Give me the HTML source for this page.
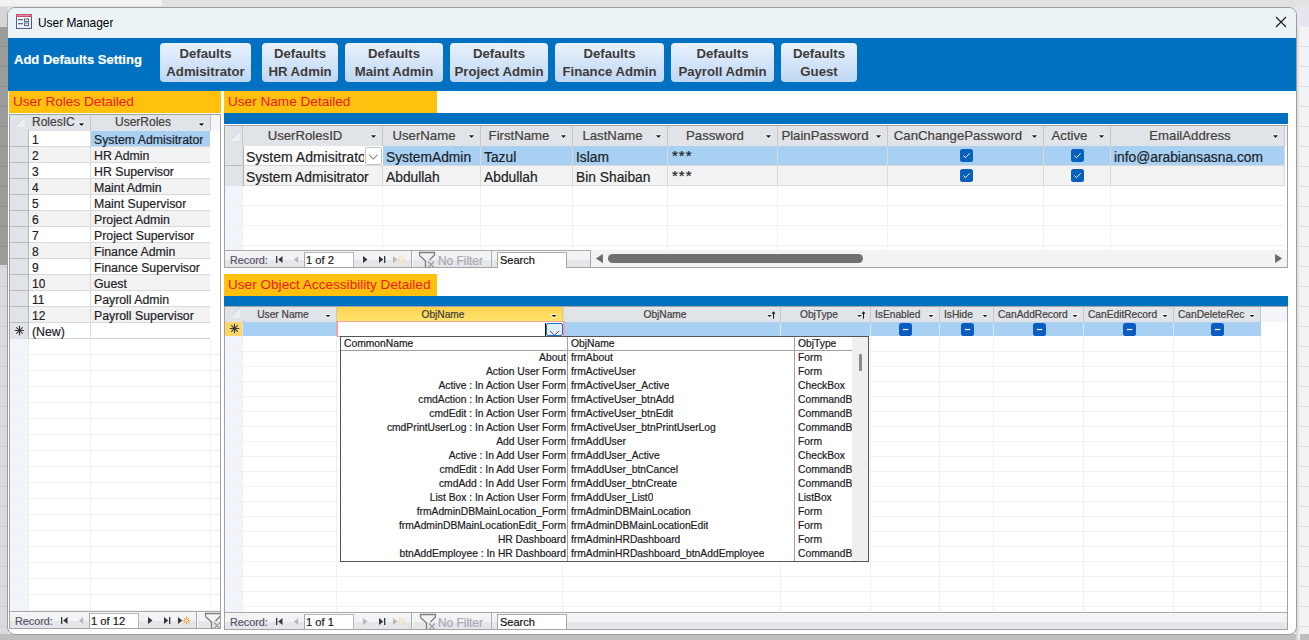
<!DOCTYPE html>
<html><head><meta charset="utf-8">
<style>
*{box-sizing:border-box;margin:0;padding:0}
html,body{width:1309px;height:640px;overflow:hidden;background:#e4e4e4;font-family:"Liberation Sans",sans-serif;position:relative}
.a{position:absolute}
.t{white-space:nowrap;overflow:hidden;-webkit-text-stroke:0.2px currentColor}
.btn{position:absolute;top:43px;height:39px;border-radius:4px;background:linear-gradient(#e9f2fd,#bfd7f3);color:#3f3b39;font-weight:bold;font-size:13.2px;line-height:18px;text-align:center;padding-top:1.5px;white-space:nowrap}
.org{position:absolute;background:#ffc10e;color:#ea1a20;font-size:13.6px;line-height:21px;padding-left:4px;white-space:nowrap}
</style></head><body>

<div class="a" style="left:0px;top:0px;width:1309px;height:7px;background:#e2e2e2"></div>
<div class="a" style="left:0px;top:0px;width:162px;height:6px;background:#f2f2f2"></div>
<div class="a" style="left:0px;top:7px;width:8px;height:20px;background:#d6d6d6"></div>
<div class="a" style="left:0px;top:27px;width:8px;height:238px;background:#9c9c9c"></div>
<div class="a" style="left:0px;top:265px;width:8px;height:375px;background:#dadade"></div>
<div class="a" style="left:1296px;top:7px;width:13px;height:633px;background:#f3f3f5"></div>
<div class="a" style="left:0px;top:634px;width:1309px;height:6px;background:#bebebe"></div>
<div class="a" style="left:1296px;top:7px;width:13px;height:20px;background:#e6e6ee"></div>
<div class="a" style="left:1296px;top:27px;width:4px;height:613px;background:linear-gradient(90deg,#d0d0d0,#f3f3f5)"></div>
<div class="a" style="left:1296px;top:46px;width:13px;height:1px;background:#e0e0e2"></div>
<div class="a" style="left:0px;top:46px;width:8px;height:1px;background:#8e8e8e"></div>
<div class="a" style="left:1296px;top:66px;width:13px;height:1px;background:#e0e0e2"></div>
<div class="a" style="left:0px;top:66px;width:8px;height:1px;background:#8e8e8e"></div>
<div class="a" style="left:1296px;top:86px;width:13px;height:1px;background:#e0e0e2"></div>
<div class="a" style="left:0px;top:86px;width:8px;height:1px;background:#8e8e8e"></div>
<div class="a" style="left:1296px;top:106px;width:13px;height:1px;background:#e0e0e2"></div>
<div class="a" style="left:0px;top:106px;width:8px;height:1px;background:#8e8e8e"></div>
<div class="a" style="left:1296px;top:126px;width:13px;height:1px;background:#e0e0e2"></div>
<div class="a" style="left:0px;top:126px;width:8px;height:1px;background:#8e8e8e"></div>
<div class="a" style="left:1296px;top:146px;width:13px;height:1px;background:#e0e0e2"></div>
<div class="a" style="left:0px;top:146px;width:8px;height:1px;background:#8e8e8e"></div>
<div class="a" style="left:1296px;top:166px;width:13px;height:1px;background:#e0e0e2"></div>
<div class="a" style="left:0px;top:166px;width:8px;height:1px;background:#8e8e8e"></div>
<div class="a" style="left:1296px;top:186px;width:13px;height:1px;background:#e0e0e2"></div>
<div class="a" style="left:0px;top:186px;width:8px;height:1px;background:#8e8e8e"></div>
<div class="a" style="left:1296px;top:206px;width:13px;height:1px;background:#e0e0e2"></div>
<div class="a" style="left:0px;top:206px;width:8px;height:1px;background:#8e8e8e"></div>
<div class="a" style="left:1296px;top:226px;width:13px;height:1px;background:#e0e0e2"></div>
<div class="a" style="left:0px;top:226px;width:8px;height:1px;background:#8e8e8e"></div>
<div class="a" style="left:1296px;top:246px;width:13px;height:1px;background:#e0e0e2"></div>
<div class="a" style="left:0px;top:246px;width:8px;height:1px;background:#8e8e8e"></div>
<div class="a" style="left:1296px;top:266px;width:13px;height:1px;background:#e0e0e2"></div>
<div class="a" style="left:0px;top:266px;width:8px;height:1px;background:#cdcdd2"></div>
<div class="a" style="left:1296px;top:286px;width:13px;height:1px;background:#e0e0e2"></div>
<div class="a" style="left:0px;top:286px;width:8px;height:1px;background:#cdcdd2"></div>
<div class="a" style="left:1296px;top:306px;width:13px;height:1px;background:#e0e0e2"></div>
<div class="a" style="left:0px;top:306px;width:8px;height:1px;background:#cdcdd2"></div>
<div class="a" style="left:1296px;top:326px;width:13px;height:1px;background:#e0e0e2"></div>
<div class="a" style="left:0px;top:326px;width:8px;height:1px;background:#cdcdd2"></div>
<div class="a" style="left:1296px;top:346px;width:13px;height:1px;background:#e0e0e2"></div>
<div class="a" style="left:0px;top:346px;width:8px;height:1px;background:#cdcdd2"></div>
<div class="a" style="left:1296px;top:366px;width:13px;height:1px;background:#e0e0e2"></div>
<div class="a" style="left:0px;top:366px;width:8px;height:1px;background:#cdcdd2"></div>
<div class="a" style="left:1296px;top:386px;width:13px;height:1px;background:#e0e0e2"></div>
<div class="a" style="left:0px;top:386px;width:8px;height:1px;background:#cdcdd2"></div>
<div class="a" style="left:1296px;top:406px;width:13px;height:1px;background:#e0e0e2"></div>
<div class="a" style="left:0px;top:406px;width:8px;height:1px;background:#cdcdd2"></div>
<div class="a" style="left:1296px;top:426px;width:13px;height:1px;background:#e0e0e2"></div>
<div class="a" style="left:0px;top:426px;width:8px;height:1px;background:#cdcdd2"></div>
<div class="a" style="left:1296px;top:446px;width:13px;height:1px;background:#e0e0e2"></div>
<div class="a" style="left:0px;top:446px;width:8px;height:1px;background:#cdcdd2"></div>
<div class="a" style="left:1296px;top:466px;width:13px;height:1px;background:#e0e0e2"></div>
<div class="a" style="left:0px;top:466px;width:8px;height:1px;background:#cdcdd2"></div>
<div class="a" style="left:1296px;top:486px;width:13px;height:1px;background:#e0e0e2"></div>
<div class="a" style="left:0px;top:486px;width:8px;height:1px;background:#cdcdd2"></div>
<div class="a" style="left:1296px;top:506px;width:13px;height:1px;background:#e0e0e2"></div>
<div class="a" style="left:0px;top:506px;width:8px;height:1px;background:#cdcdd2"></div>
<div class="a" style="left:1296px;top:526px;width:13px;height:1px;background:#e0e0e2"></div>
<div class="a" style="left:0px;top:526px;width:8px;height:1px;background:#cdcdd2"></div>
<div class="a" style="left:1296px;top:546px;width:13px;height:1px;background:#e0e0e2"></div>
<div class="a" style="left:0px;top:546px;width:8px;height:1px;background:#cdcdd2"></div>
<div class="a" style="left:1296px;top:566px;width:13px;height:1px;background:#e0e0e2"></div>
<div class="a" style="left:0px;top:566px;width:8px;height:1px;background:#cdcdd2"></div>
<div class="a" style="left:1296px;top:586px;width:13px;height:1px;background:#e0e0e2"></div>
<div class="a" style="left:0px;top:586px;width:8px;height:1px;background:#cdcdd2"></div>
<div class="a" style="left:1296px;top:606px;width:13px;height:1px;background:#e0e0e2"></div>
<div class="a" style="left:0px;top:606px;width:8px;height:1px;background:#cdcdd2"></div>
<div class="a" style="left:1296px;top:626px;width:13px;height:1px;background:#e0e0e2"></div>
<div class="a" style="left:0px;top:626px;width:8px;height:1px;background:#cdcdd2"></div>
<div class="a" style="left:7px;top:7px;width:1290px;height:628px;border:1px solid #9c9c9c;border-radius:8px;background:#fff;overflow:hidden">
<div class="a" style="left:0;top:0;width:1288px;height:30px;background:#ebf3f6"></div>
<div class="a" style="left:0;top:30px;width:1288px;height:53px;background:#0070c0"></div>
</div>
<svg class="a" style="left:16px;top:14px" width="16" height="15" viewBox="0 0 16 15">
<defs><linearGradient id="ib" x1="0" y1="0" x2="1" y2="1"><stop offset="0" stop-color="#fff"/><stop offset="1" stop-color="#dde4fa"/></linearGradient></defs>
<rect x="0.5" y="0.5" width="15" height="14" fill="url(#ib)" stroke="#56607e"/>
<rect x="0" y="0" width="16" height="3" fill="#c94a72"/>
<rect x="1" y="1" width="14" height="1" fill="#e48aa6"/>
<rect x="2" y="5" width="5" height="1.3" fill="#5a6aa0"/>
<rect x="2" y="9" width="5" height="1.3" fill="#5a6aa0"/>
<rect x="8.5" y="5" width="4" height="2.5" fill="#eef2fa" stroke="#5a6890" stroke-width="1"/>
<rect x="8.5" y="9" width="4" height="2.5" fill="#eef2fa" stroke="#5a6890" stroke-width="1"/>
</svg>
<div class="a t" style="left:38px;top:15px;font-size:11.9px;color:#000;line-height:16px;-webkit-text-stroke:0">User Manager</div>
<svg class="a" style="left:1275px;top:16px" width="12" height="12" viewBox="0 0 12 12"><path d="M1 1L11 11M11 1L1 11" stroke="#1a1a1a" stroke-width="1.1"/></svg>
<div class="a t" style="left:14px;top:52px;color:#fff;font-weight:bold;font-size:13px;line-height:16px">Add Defaults Setting</div>
<div class="btn" style="left:160px;width:91px">Defaults<br>Admisitrator</div>
<div class="btn" style="left:262px;width:76px">Defaults<br>HR Admin</div>
<div class="btn" style="left:345px;width:98px">Defaults<br>Maint Admin</div>
<div class="btn" style="left:450px;width:98px">Defaults<br>Project Admin</div>
<div class="btn" style="left:555px;width:109px">Defaults<br>Finance Admin</div>
<div class="btn" style="left:671px;width:103px">Defaults<br>Payroll Admin</div>
<div class="btn" style="left:781px;width:76px">Defaults<br>Guest</div>
<div class="org" style="left:9px;top:91px;width:212px;height:22px">User Roles Detailed</div>
<div class="a" style="left:9px;top:114px;width:212px;height:515px;border:1px solid #a3a3a3;background:#fff"></div>
<div class="a" style="left:10px;top:115px;width:200px;height:16px;background:#e0e3e8"></div>
<div class="a" style="left:210px;top:115px;width:10px;height:16px;background:#f4f5fb"></div>
<svg class="a" style="left:14px;top:116px" width="12" height="12" viewBox="0 0 12 12"><path d="M0 11L11 0V11Z" fill="#eceef2"/><path d="M0.5 11L11 0.5" stroke="#a9c6ea" stroke-width="0.8"/></svg>
<div class="a" style="left:90px;top:115px;width:1px;height:16px;background:#c4c8cc"></div>
<div class="a" style="left:210px;top:115px;width:1px;height:16px;background:#c4c8cc"></div>
<div class="a t" style="left:32px;top:115px;width:49px;font-size:12px;line-height:15px;color:#44403c;">RolesIC</div>
<svg class="a" style="left:77px;top:122px" width="9" height="6" viewBox="0 0 9 6"><path d="M0.5 0.5H8.5L4.5 5Z" fill="#fff"/><path d="M1.8 1.2H7.2L4.5 4Z" fill="#1a1e28"/></svg>
<div class="a t" style="left:91px;top:115px;width:104px;font-size:12px;line-height:15px;color:#44403c;text-align:center">UserRoles</div>
<svg class="a" style="left:197px;top:122px" width="9" height="6" viewBox="0 0 9 6"><path d="M0.5 0.5H8.5L4.5 5Z" fill="#fff"/><path d="M1.8 1.2H7.2L4.5 4Z" fill="#1a1e28"/></svg>
<div class="a" style="left:28px;top:131px;width:182px;height:16px;background:#fff"></div>
<div class="a" style="left:91px;top:131px;width:119px;height:15px;background:#a8d0f2"></div>
<div class="a" style="left:28px;top:146px;width:182px;height:1px;background:#dadada"></div>
<div class="a" style="left:90px;top:131px;width:1px;height:16px;background:#dadada"></div>
<div class="a" style="left:10px;top:131px;width:18px;height:16px;background:#e0e3e8"></div>
<div class="a" style="left:10px;top:146px;width:18px;height:1px;background:#b9bcc0"></div>
<div class="a t" style="left:32px;top:132px;font-size:12px;line-height:16px;color:#1e1e28">1</div>
<div class="a t" style="left:94px;top:132px;font-size:12.3px;line-height:16px;color:#1e1e28">System Admisitrator</div>
<div class="a" style="left:28px;top:147px;width:182px;height:16px;background:#f2f2f2"></div>
<div class="a" style="left:28px;top:162px;width:182px;height:1px;background:#dadada"></div>
<div class="a" style="left:90px;top:147px;width:1px;height:16px;background:#dadada"></div>
<div class="a" style="left:10px;top:147px;width:18px;height:16px;background:#e0e3e8"></div>
<div class="a" style="left:10px;top:162px;width:18px;height:1px;background:#b9bcc0"></div>
<div class="a t" style="left:32px;top:148px;font-size:12px;line-height:16px;color:#1e1e28">2</div>
<div class="a t" style="left:94px;top:148px;font-size:12.3px;line-height:16px;color:#1e1e28">HR Admin</div>
<div class="a" style="left:28px;top:163px;width:182px;height:16px;background:#fff"></div>
<div class="a" style="left:28px;top:178px;width:182px;height:1px;background:#dadada"></div>
<div class="a" style="left:90px;top:163px;width:1px;height:16px;background:#dadada"></div>
<div class="a" style="left:10px;top:163px;width:18px;height:16px;background:#e0e3e8"></div>
<div class="a" style="left:10px;top:178px;width:18px;height:1px;background:#b9bcc0"></div>
<div class="a t" style="left:32px;top:164px;font-size:12px;line-height:16px;color:#1e1e28">3</div>
<div class="a t" style="left:94px;top:164px;font-size:12.3px;line-height:16px;color:#1e1e28">HR Supervisor</div>
<div class="a" style="left:28px;top:179px;width:182px;height:16px;background:#f2f2f2"></div>
<div class="a" style="left:28px;top:194px;width:182px;height:1px;background:#dadada"></div>
<div class="a" style="left:90px;top:179px;width:1px;height:16px;background:#dadada"></div>
<div class="a" style="left:10px;top:179px;width:18px;height:16px;background:#e0e3e8"></div>
<div class="a" style="left:10px;top:194px;width:18px;height:1px;background:#b9bcc0"></div>
<div class="a t" style="left:32px;top:180px;font-size:12px;line-height:16px;color:#1e1e28">4</div>
<div class="a t" style="left:94px;top:180px;font-size:12.3px;line-height:16px;color:#1e1e28">Maint Admin</div>
<div class="a" style="left:28px;top:195px;width:182px;height:16px;background:#fff"></div>
<div class="a" style="left:28px;top:210px;width:182px;height:1px;background:#dadada"></div>
<div class="a" style="left:90px;top:195px;width:1px;height:16px;background:#dadada"></div>
<div class="a" style="left:10px;top:195px;width:18px;height:16px;background:#e0e3e8"></div>
<div class="a" style="left:10px;top:210px;width:18px;height:1px;background:#b9bcc0"></div>
<div class="a t" style="left:32px;top:196px;font-size:12px;line-height:16px;color:#1e1e28">5</div>
<div class="a t" style="left:94px;top:196px;font-size:12.3px;line-height:16px;color:#1e1e28">Maint Supervisor</div>
<div class="a" style="left:28px;top:211px;width:182px;height:16px;background:#f2f2f2"></div>
<div class="a" style="left:28px;top:226px;width:182px;height:1px;background:#dadada"></div>
<div class="a" style="left:90px;top:211px;width:1px;height:16px;background:#dadada"></div>
<div class="a" style="left:10px;top:211px;width:18px;height:16px;background:#e0e3e8"></div>
<div class="a" style="left:10px;top:226px;width:18px;height:1px;background:#b9bcc0"></div>
<div class="a t" style="left:32px;top:212px;font-size:12px;line-height:16px;color:#1e1e28">6</div>
<div class="a t" style="left:94px;top:212px;font-size:12.3px;line-height:16px;color:#1e1e28">Project Admin</div>
<div class="a" style="left:28px;top:227px;width:182px;height:16px;background:#fff"></div>
<div class="a" style="left:28px;top:242px;width:182px;height:1px;background:#dadada"></div>
<div class="a" style="left:90px;top:227px;width:1px;height:16px;background:#dadada"></div>
<div class="a" style="left:10px;top:227px;width:18px;height:16px;background:#e0e3e8"></div>
<div class="a" style="left:10px;top:242px;width:18px;height:1px;background:#b9bcc0"></div>
<div class="a t" style="left:32px;top:228px;font-size:12px;line-height:16px;color:#1e1e28">7</div>
<div class="a t" style="left:94px;top:228px;font-size:12.3px;line-height:16px;color:#1e1e28">Project Supervisor</div>
<div class="a" style="left:28px;top:243px;width:182px;height:16px;background:#f2f2f2"></div>
<div class="a" style="left:28px;top:258px;width:182px;height:1px;background:#dadada"></div>
<div class="a" style="left:90px;top:243px;width:1px;height:16px;background:#dadada"></div>
<div class="a" style="left:10px;top:243px;width:18px;height:16px;background:#e0e3e8"></div>
<div class="a" style="left:10px;top:258px;width:18px;height:1px;background:#b9bcc0"></div>
<div class="a t" style="left:32px;top:244px;font-size:12px;line-height:16px;color:#1e1e28">8</div>
<div class="a t" style="left:94px;top:244px;font-size:12.3px;line-height:16px;color:#1e1e28">Finance Admin</div>
<div class="a" style="left:28px;top:259px;width:182px;height:16px;background:#fff"></div>
<div class="a" style="left:28px;top:274px;width:182px;height:1px;background:#dadada"></div>
<div class="a" style="left:90px;top:259px;width:1px;height:16px;background:#dadada"></div>
<div class="a" style="left:10px;top:259px;width:18px;height:16px;background:#e0e3e8"></div>
<div class="a" style="left:10px;top:274px;width:18px;height:1px;background:#b9bcc0"></div>
<div class="a t" style="left:32px;top:260px;font-size:12px;line-height:16px;color:#1e1e28">9</div>
<div class="a t" style="left:94px;top:260px;font-size:12.3px;line-height:16px;color:#1e1e28">Finance Supervisor</div>
<div class="a" style="left:28px;top:275px;width:182px;height:16px;background:#f2f2f2"></div>
<div class="a" style="left:28px;top:290px;width:182px;height:1px;background:#dadada"></div>
<div class="a" style="left:90px;top:275px;width:1px;height:16px;background:#dadada"></div>
<div class="a" style="left:10px;top:275px;width:18px;height:16px;background:#e0e3e8"></div>
<div class="a" style="left:10px;top:290px;width:18px;height:1px;background:#b9bcc0"></div>
<div class="a t" style="left:32px;top:276px;font-size:12px;line-height:16px;color:#1e1e28">10</div>
<div class="a t" style="left:94px;top:276px;font-size:12.3px;line-height:16px;color:#1e1e28">Guest</div>
<div class="a" style="left:28px;top:291px;width:182px;height:16px;background:#fff"></div>
<div class="a" style="left:28px;top:306px;width:182px;height:1px;background:#dadada"></div>
<div class="a" style="left:90px;top:291px;width:1px;height:16px;background:#dadada"></div>
<div class="a" style="left:10px;top:291px;width:18px;height:16px;background:#e0e3e8"></div>
<div class="a" style="left:10px;top:306px;width:18px;height:1px;background:#b9bcc0"></div>
<div class="a t" style="left:32px;top:292px;font-size:12px;line-height:16px;color:#1e1e28">11</div>
<div class="a t" style="left:94px;top:292px;font-size:12.3px;line-height:16px;color:#1e1e28">Payroll Admin</div>
<div class="a" style="left:28px;top:307px;width:182px;height:16px;background:#f2f2f2"></div>
<div class="a" style="left:28px;top:322px;width:182px;height:1px;background:#dadada"></div>
<div class="a" style="left:90px;top:307px;width:1px;height:16px;background:#dadada"></div>
<div class="a" style="left:10px;top:307px;width:18px;height:16px;background:#e0e3e8"></div>
<div class="a" style="left:10px;top:322px;width:18px;height:1px;background:#b9bcc0"></div>
<div class="a t" style="left:32px;top:308px;font-size:12px;line-height:16px;color:#1e1e28">12</div>
<div class="a t" style="left:94px;top:308px;font-size:12.3px;line-height:16px;color:#1e1e28">Payroll Supervisor</div>
<div class="a" style="left:28px;top:130px;width:1px;height:208px;background:#b4b6ba"></div>
<div class="a" style="left:10px;top:323px;width:18px;height:16px;background:#e0e3e8"></div>
<div class="a" style="left:28px;top:323px;width:1px;height:16px;background:#b4b6ba"></div>
<div class="a" style="left:28px;top:338px;width:182px;height:1px;background:#cfcfcf"></div>
<div class="a" style="left:90px;top:323px;width:1px;height:16px;background:#dadada"></div>
<svg class="a" style="left:14px;top:325px" width="11" height="11" viewBox="0 0 11 11"><path d="M5.5 0.8V10.2M0.8 5.5H10.2M2.3 2.3L8.7 8.7M8.7 2.3L2.3 8.7" stroke="#38383e" stroke-width="1.1"/><circle cx="5.5" cy="5.5" r="1.3" fill="#38383e"/></svg>
<div class="a t" style="left:32px;top:324px;font-size:12.3px;line-height:16px;color:#1e1e28">(New)</div>
<div class="a" style="left:10px;top:339px;width:18px;height:272px;background:#f2f4fc"></div>
<div class="a" style="left:10px;top:354px;width:210px;height:1px;background:#f0f0f0"></div>
<div class="a" style="left:10px;top:370px;width:210px;height:1px;background:#f0f0f0"></div>
<div class="a" style="left:10px;top:386px;width:210px;height:1px;background:#f0f0f0"></div>
<div class="a" style="left:10px;top:402px;width:210px;height:1px;background:#f0f0f0"></div>
<div class="a" style="left:10px;top:418px;width:210px;height:1px;background:#f0f0f0"></div>
<div class="a" style="left:10px;top:434px;width:210px;height:1px;background:#f0f0f0"></div>
<div class="a" style="left:10px;top:450px;width:210px;height:1px;background:#f0f0f0"></div>
<div class="a" style="left:10px;top:466px;width:210px;height:1px;background:#f0f0f0"></div>
<div class="a" style="left:10px;top:482px;width:210px;height:1px;background:#f0f0f0"></div>
<div class="a" style="left:10px;top:498px;width:210px;height:1px;background:#f0f0f0"></div>
<div class="a" style="left:10px;top:514px;width:210px;height:1px;background:#f0f0f0"></div>
<div class="a" style="left:10px;top:530px;width:210px;height:1px;background:#f0f0f0"></div>
<div class="a" style="left:10px;top:546px;width:210px;height:1px;background:#f0f0f0"></div>
<div class="a" style="left:10px;top:562px;width:210px;height:1px;background:#f0f0f0"></div>
<div class="a" style="left:10px;top:578px;width:210px;height:1px;background:#f0f0f0"></div>
<div class="a" style="left:10px;top:594px;width:210px;height:1px;background:#f0f0f0"></div>
<div class="a" style="left:10px;top:610px;width:210px;height:1px;background:#f0f0f0"></div>
<div class="a" style="left:28px;top:339px;width:1px;height:272px;background:#ececec"></div>
<div class="a" style="left:90px;top:339px;width:1px;height:272px;background:#f0f0f0"></div>
<div class="a" style="left:210px;top:339px;width:1px;height:272px;background:#f3f3f3"></div>
<div class="a" style="left:10px;top:611px;width:210px;height:1px;background:#a8a8a8"></div>
<div class="a" style="left:10px;top:612px;width:210px;height:16px;background:linear-gradient(#fafbfc 0,#f2f3f5 1px,#f2f3f5 9px,#e5e6e9 9px)"></div>
<div class="a t" style="left:15px;top:613px;font-size:10.8px;line-height:17px;color:#575268">Record:</div>
<svg class="a" style="left:61px;top:617px" width="8" height="7" viewBox="0 0 8 7"><rect x="0" y="0" width="1.3" height="7" fill="#34363c"/><path d="M2.2 3.5L6.5 0V7Z" fill="#34363c"/></svg>
<svg class="a" style="left:79px;top:617px" width="5" height="7" viewBox="0 0 5 7"><path d="M0 3.5L4.2 0V7Z" fill="#b6b8bc"/></svg>
<div class="a" style="left:89px;top:613px;width:50px;height:15px;background:#fff;border-left:1px solid #a8a8a8;border-right:1px solid #b8b8b8;border-top:1px solid #b8b8b8"></div>
<div class="a t" style="left:91px;top:613px;font-size:11.2px;line-height:17px;color:#1a1a24">1 of 12</div>
<svg class="a" style="left:148px;top:617px" width="5" height="7" viewBox="0 0 5 7"><path d="M0 0L4.5 3.5L0 7Z" fill="#34363c"/></svg>
<svg class="a" style="left:164px;top:617px" width="7" height="7" viewBox="0 0 7 7"><path d="M0 0L4.2 3.5L0 7Z" fill="#34363c"/><rect x="5" y="0" width="1.3" height="7" fill="#34363c"/></svg>
<svg class="a" style="left:178px;top:615px" width="14" height="12" viewBox="0 0 14 12"><path d="M0 2L4.2 5.5L0 9Z" fill="#34363c"/><g stroke="#f0a030" stroke-width="1"><path d="M8.5 1.5V9.5M4.5 5.5H12.5M5.7 2.7L11.3 8.3M11.3 2.7L5.7 8.3"/></g><circle cx="8.5" cy="5.5" r="1.6" fill="#fff" stroke="#f0a030"/></svg>
<div class="a" style="left:196px;top:612px;width:1px;height:16px;background:#a8a8a8"></div>
<div class="a" style="left:197px;top:612px;width:1px;height:16px;background:#fcfcfc"></div>
<svg class="a" style="left:204px;top:612px" width="16" height="17" viewBox="0 0 16 17"><g fill="none" stroke="#7e7e7e" stroke-width="1.3"><path d="M1.5 4.5V1.5H16.5V4L11.5 9"/><path d="M1.5 4.5L7.5 10V16.5"/><path d="M10 10.5L16 16.5M16 10.5L10 16.5" stroke="#9a9a9a" stroke-width="1.1"/></g></svg>
<div class="a" style="left:220px;top:612px;width:1px;height:17px;background:#a3a3a3"></div>
<div class="org" style="left:224px;top:91px;width:213px;height:22px">User Name Detailed</div>
<div class="a" style="left:224px;top:113px;width:1064px;height:11px;background:#0070c0"></div>
<div class="a" style="left:224px;top:125px;width:1064px;height:143px;border:1px solid #a3a3a3;background:#fff"></div>
<div class="a" style="left:225px;top:126px;width:1060px;height:20px;background:#e0e3e8"></div>
<div class="a" style="left:1285px;top:126px;width:2px;height:20px;background:#f4f5fb"></div>
<svg class="a" style="left:229px;top:130px" width="12" height="12" viewBox="0 0 12 12"><path d="M0 11L11 0V11Z" fill="#eceef2"/><path d="M0.5 11L11 0.5" stroke="#a9c6ea" stroke-width="0.8"/></svg>
<div class="a" style="left:242px;top:126px;width:1px;height:20px;background:#c4c8cc"></div>
<div class="a t" style="left:243px;top:126px;width:124px;font-size:13.2px;line-height:20px;color:#44403c;text-align:center">UserRolesID</div>
<svg class="a" style="left:369px;top:134px" width="9" height="6" viewBox="0 0 9 6"><path d="M0.5 0.5H8.5L4.5 5Z" fill="#fff"/><path d="M1.8 1.2H7.2L4.5 4Z" fill="#1a1e28"/></svg>
<div class="a" style="left:382px;top:126px;width:1px;height:20px;background:#c4c8cc"></div>
<div class="a t" style="left:383px;top:126px;width:82px;font-size:13.2px;line-height:20px;color:#44403c;text-align:center">UserName</div>
<svg class="a" style="left:467px;top:134px" width="9" height="6" viewBox="0 0 9 6"><path d="M0.5 0.5H8.5L4.5 5Z" fill="#fff"/><path d="M1.8 1.2H7.2L4.5 4Z" fill="#1a1e28"/></svg>
<div class="a" style="left:480px;top:126px;width:1px;height:20px;background:#c4c8cc"></div>
<div class="a t" style="left:481px;top:126px;width:76px;font-size:13.2px;line-height:20px;color:#44403c;text-align:center">FirstName</div>
<svg class="a" style="left:559px;top:134px" width="9" height="6" viewBox="0 0 9 6"><path d="M0.5 0.5H8.5L4.5 5Z" fill="#fff"/><path d="M1.8 1.2H7.2L4.5 4Z" fill="#1a1e28"/></svg>
<div class="a" style="left:572px;top:126px;width:1px;height:20px;background:#c4c8cc"></div>
<div class="a t" style="left:573px;top:126px;width:79px;font-size:13.2px;line-height:20px;color:#44403c;text-align:center">LastName</div>
<svg class="a" style="left:654px;top:134px" width="9" height="6" viewBox="0 0 9 6"><path d="M0.5 0.5H8.5L4.5 5Z" fill="#fff"/><path d="M1.8 1.2H7.2L4.5 4Z" fill="#1a1e28"/></svg>
<div class="a" style="left:667px;top:126px;width:1px;height:20px;background:#c4c8cc"></div>
<div class="a t" style="left:668px;top:126px;width:94px;font-size:13.2px;line-height:20px;color:#44403c;text-align:center">Password</div>
<svg class="a" style="left:764px;top:134px" width="9" height="6" viewBox="0 0 9 6"><path d="M0.5 0.5H8.5L4.5 5Z" fill="#fff"/><path d="M1.8 1.2H7.2L4.5 4Z" fill="#1a1e28"/></svg>
<div class="a" style="left:777px;top:126px;width:1px;height:20px;background:#c4c8cc"></div>
<div class="a t" style="left:778px;top:126px;width:94px;font-size:13.2px;line-height:20px;color:#44403c;text-align:center">PlainPassword</div>
<svg class="a" style="left:874px;top:134px" width="9" height="6" viewBox="0 0 9 6"><path d="M0.5 0.5H8.5L4.5 5Z" fill="#fff"/><path d="M1.8 1.2H7.2L4.5 4Z" fill="#1a1e28"/></svg>
<div class="a" style="left:887px;top:126px;width:1px;height:20px;background:#c4c8cc"></div>
<div class="a t" style="left:888px;top:126px;width:140px;font-size:13.2px;line-height:20px;color:#44403c;text-align:center">CanChangePassword</div>
<svg class="a" style="left:1030px;top:134px" width="9" height="6" viewBox="0 0 9 6"><path d="M0.5 0.5H8.5L4.5 5Z" fill="#fff"/><path d="M1.8 1.2H7.2L4.5 4Z" fill="#1a1e28"/></svg>
<div class="a" style="left:1043px;top:126px;width:1px;height:20px;background:#c4c8cc"></div>
<div class="a t" style="left:1044px;top:126px;width:51px;font-size:13.2px;line-height:20px;color:#44403c;text-align:center">Active</div>
<svg class="a" style="left:1097px;top:134px" width="9" height="6" viewBox="0 0 9 6"><path d="M0.5 0.5H8.5L4.5 5Z" fill="#fff"/><path d="M1.8 1.2H7.2L4.5 4Z" fill="#1a1e28"/></svg>
<div class="a" style="left:1110px;top:126px;width:1px;height:20px;background:#c4c8cc"></div>
<div class="a t" style="left:1111px;top:126px;width:158px;font-size:13.2px;line-height:20px;color:#44403c;text-align:center">EmailAddress</div>
<svg class="a" style="left:1271px;top:134px" width="9" height="6" viewBox="0 0 9 6"><path d="M0.5 0.5H8.5L4.5 5Z" fill="#fff"/><path d="M1.8 1.2H7.2L4.5 4Z" fill="#1a1e28"/></svg>
<div class="a" style="left:1284px;top:126px;width:1px;height:20px;background:#c4c8cc"></div>
<div class="a" style="left:243px;top:146px;width:1042px;height:20px;background:#a8d0f2"></div>
<div class="a" style="left:225px;top:146px;width:18px;height:20px;background:#e0e3e8"></div>
<div class="a" style="left:225px;top:165px;width:18px;height:1px;background:#b9bcc0"></div>
<div class="a" style="left:243px;top:165px;width:1042px;height:1px;background:#dadada"></div>
<div class="a" style="left:242px;top:146px;width:1px;height:20px;background:#dadada"></div>
<div class="a t" style="left:246px;top:147px;width:136px;font-size:13.8px;line-height:21px;color:#1e1e28">System Admisitrator</div>
<div class="a" style="left:382px;top:146px;width:1px;height:20px;background:#dadada"></div>
<div class="a t" style="left:386px;top:147px;width:94px;font-size:13.8px;line-height:21px;color:#1e1e28">SystemAdmin</div>
<div class="a" style="left:480px;top:146px;width:1px;height:20px;background:#dadada"></div>
<div class="a t" style="left:484px;top:147px;width:88px;font-size:13.8px;line-height:21px;color:#1e1e28">Tazul</div>
<div class="a" style="left:572px;top:146px;width:1px;height:20px;background:#dadada"></div>
<div class="a t" style="left:576px;top:147px;width:91px;font-size:13.8px;line-height:21px;color:#1e1e28">Islam</div>
<div class="a" style="left:667px;top:146px;width:1px;height:20px;background:#dadada"></div>
<div class="a t" style="left:672px;top:149px;font-size:15px;line-height:14px;color:#1e1e28;letter-spacing:1px">***</div>
<div class="a" style="left:777px;top:146px;width:1px;height:20px;background:#dadada"></div>
<div class="a" style="left:887px;top:146px;width:1px;height:20px;background:#dadada"></div>
<svg class="a" style="left:960px;top:149px" width="13" height="13" viewBox="0 0 13 13"><rect x="0" y="0" width="13" height="13" rx="2.5" fill="#0860bd"/><path d="M3.3 6.6L5.4 8.6L9.7 4.4" fill="none" stroke="#fff" stroke-width="0.95"/></svg>
<div class="a" style="left:1043px;top:146px;width:1px;height:20px;background:#dadada"></div>
<svg class="a" style="left:1071px;top:149px" width="13" height="13" viewBox="0 0 13 13"><rect x="0" y="0" width="13" height="13" rx="2.5" fill="#0860bd"/><path d="M3.3 6.6L5.4 8.6L9.7 4.4" fill="none" stroke="#fff" stroke-width="0.95"/></svg>
<div class="a" style="left:1110px;top:146px;width:1px;height:20px;background:#dadada"></div>
<div class="a t" style="left:1114px;top:147px;width:170px;font-size:13.8px;line-height:21px;color:#1e1e28">info@arabiansasna.com</div>
<div class="a" style="left:1284px;top:146px;width:1px;height:20px;background:#dadada"></div>
<div class="a" style="left:243px;top:166px;width:1042px;height:20px;background:#f2f2f2"></div>
<div class="a" style="left:225px;top:166px;width:18px;height:20px;background:#e0e3e8"></div>
<div class="a" style="left:243px;top:185px;width:1042px;height:1px;background:#dadada"></div>
<div class="a" style="left:242px;top:166px;width:1px;height:20px;background:#dadada"></div>
<div class="a t" style="left:246px;top:167px;width:136px;font-size:13.8px;line-height:21px;color:#1e1e28">System Admisitrator</div>
<div class="a" style="left:382px;top:166px;width:1px;height:20px;background:#dadada"></div>
<div class="a t" style="left:386px;top:167px;width:94px;font-size:13.8px;line-height:21px;color:#1e1e28">Abdullah</div>
<div class="a" style="left:480px;top:166px;width:1px;height:20px;background:#dadada"></div>
<div class="a t" style="left:484px;top:167px;width:88px;font-size:13.8px;line-height:21px;color:#1e1e28">Abdullah</div>
<div class="a" style="left:572px;top:166px;width:1px;height:20px;background:#dadada"></div>
<div class="a t" style="left:576px;top:167px;width:91px;font-size:13.8px;line-height:21px;color:#1e1e28">Bin Shaiban</div>
<div class="a" style="left:667px;top:166px;width:1px;height:20px;background:#dadada"></div>
<div class="a t" style="left:672px;top:169px;font-size:15px;line-height:14px;color:#1e1e28;letter-spacing:1px">***</div>
<div class="a" style="left:777px;top:166px;width:1px;height:20px;background:#dadada"></div>
<div class="a" style="left:887px;top:166px;width:1px;height:20px;background:#dadada"></div>
<svg class="a" style="left:960px;top:169px" width="13" height="13" viewBox="0 0 13 13"><rect x="0" y="0" width="13" height="13" rx="2.5" fill="#0860bd"/><path d="M3.3 6.6L5.4 8.6L9.7 4.4" fill="none" stroke="#fff" stroke-width="0.95"/></svg>
<div class="a" style="left:1043px;top:166px;width:1px;height:20px;background:#dadada"></div>
<svg class="a" style="left:1071px;top:169px" width="13" height="13" viewBox="0 0 13 13"><rect x="0" y="0" width="13" height="13" rx="2.5" fill="#0860bd"/><path d="M3.3 6.6L5.4 8.6L9.7 4.4" fill="none" stroke="#fff" stroke-width="0.95"/></svg>
<div class="a" style="left:1110px;top:166px;width:1px;height:20px;background:#dadada"></div>
<div class="a" style="left:1284px;top:166px;width:1px;height:20px;background:#dadada"></div>
<div class="a" style="left:243px;top:146px;width:140px;height:19px;background:#fff"></div>
<div class="a t" style="left:246px;top:147px;width:118px;font-size:14px;line-height:21px;color:#1e1e28">System Admisitrator</div>
<div class="a" style="left:365px;top:147px;width:17px;height:18px;background:#fff;border:1px solid #c4c4c4;border-radius:2px"></div>
<svg class="a" style="left:368px;top:154px" width="11" height="6" viewBox="0 0 11 6"><path d="M1 0.8L5.3 5L9.6 0.8" fill="none" stroke="#3c3c3c" stroke-width="0.9"/></svg>
<div class="a" style="left:243px;top:146px;width:1px;height:40px;background:#b4b6ba"></div>
<div class="a" style="left:225px;top:186px;width:18px;height:64px;background:#f2f4fc"></div>
<div class="a" style="left:225px;top:205px;width:1060px;height:1px;background:#f1f1f1"></div>
<div class="a" style="left:225px;top:225px;width:1060px;height:1px;background:#f1f1f1"></div>
<div class="a" style="left:225px;top:245px;width:1060px;height:1px;background:#f1f1f1"></div>
<div class="a" style="left:242px;top:186px;width:1px;height:64px;background:#f1f1f1"></div>
<div class="a" style="left:382px;top:186px;width:1px;height:64px;background:#f1f1f1"></div>
<div class="a" style="left:480px;top:186px;width:1px;height:64px;background:#f1f1f1"></div>
<div class="a" style="left:572px;top:186px;width:1px;height:64px;background:#f1f1f1"></div>
<div class="a" style="left:667px;top:186px;width:1px;height:64px;background:#f1f1f1"></div>
<div class="a" style="left:777px;top:186px;width:1px;height:64px;background:#f1f1f1"></div>
<div class="a" style="left:887px;top:186px;width:1px;height:64px;background:#f1f1f1"></div>
<div class="a" style="left:1043px;top:186px;width:1px;height:64px;background:#f1f1f1"></div>
<div class="a" style="left:1110px;top:186px;width:1px;height:64px;background:#f1f1f1"></div>
<div class="a" style="left:225px;top:250px;width:1062px;height:1px;background:#a8a8a8"></div>
<div class="a" style="left:225px;top:251px;width:1062px;height:16px;background:linear-gradient(#fafbfc 0,#f2f3f5 1px,#f2f3f5 9px,#e5e6e9 9px)"></div>
<div class="a t" style="left:230px;top:252px;font-size:10.8px;line-height:17px;color:#575268">Record:</div>
<svg class="a" style="left:276px;top:256px" width="8" height="7" viewBox="0 0 8 7"><rect x="0" y="0" width="1.3" height="7" fill="#34363c"/><path d="M2.2 3.5L6.5 0V7Z" fill="#34363c"/></svg>
<svg class="a" style="left:294px;top:256px" width="5" height="7" viewBox="0 0 5 7"><path d="M0 3.5L4.2 0V7Z" fill="#b6b8bc"/></svg>
<div class="a" style="left:304px;top:252px;width:50px;height:15px;background:#fff;border-left:1px solid #a8a8a8;border-right:1px solid #b8b8b8;border-top:1px solid #b8b8b8"></div>
<div class="a t" style="left:306px;top:252px;font-size:11.2px;line-height:17px;color:#1a1a24">1 of 2</div>
<svg class="a" style="left:363px;top:256px" width="5" height="7" viewBox="0 0 5 7"><path d="M0 0L4.5 3.5L0 7Z" fill="#34363c"/></svg>
<svg class="a" style="left:379px;top:256px" width="7" height="7" viewBox="0 0 7 7"><path d="M0 0L4.2 3.5L0 7Z" fill="#34363c"/><rect x="5" y="0" width="1.3" height="7" fill="#34363c"/></svg>
<svg class="a" style="left:393px;top:254px" width="14" height="12" viewBox="0 0 14 12"><path d="M0 2L4.2 5.5L0 9Z" fill="#b6b8bc"/><g stroke="#f6dcb4" stroke-width="1"><path d="M8.5 1.5V9.5M4.5 5.5H12.5M5.7 2.7L11.3 8.3M11.3 2.7L5.7 8.3"/></g><circle cx="8.5" cy="5.5" r="1.6" fill="#fff" stroke="#f6dcb4"/></svg>
<div class="a" style="left:411px;top:251px;width:1px;height:16px;background:#a8a8a8"></div>
<div class="a" style="left:412px;top:251px;width:1px;height:16px;background:#fcfcfc"></div>
<svg class="a" style="left:418px;top:251px" width="18" height="17" viewBox="0 0 18 17"><g fill="none" stroke="#7e7e7e" stroke-width="1.3"><path d="M1.5 4.5V1.5H16.5V4L11.5 9"/><path d="M1.5 4.5L7.5 10V16.5"/><path d="M10 10.5L16 16.5M16 10.5L10 16.5" stroke="#9a9a9a" stroke-width="1.1"/></g></svg>
<div class="a t" style="left:438px;top:253px;font-size:11.9px;line-height:17px;color:#a8a8b4">No Filter</div>
<div class="a" style="left:491px;top:251px;width:1px;height:17px;background:#b0b0b0"></div>
<div class="a" style="left:497px;top:252px;width:70px;height:16px;background:#fff;border:1px solid #a8a8a8;border-bottom:0"></div>
<div class="a t" style="left:500px;top:252px;font-size:11px;line-height:17px;color:#111">Search</div>
<div class="a" style="left:590px;top:250px;width:1px;height:17px;background:#a4a8b2"></div>
<div class="a" style="left:591px;top:250px;width:696px;height:17px;background:#f3f3f3"></div>
<svg class="a" style="left:596px;top:254px" width="7" height="9" viewBox="0 0 7 9"><path d="M0.3 4.5L6.8 0.3V8.7Z" fill="#6a6a6a" stroke="#6a6a6a" stroke-width="0.5" stroke-linejoin="round"/></svg>
<div class="a" style="left:608px;top:254px;width:255px;height:9px;background:#707070;border-radius:4.5px"></div>
<svg class="a" style="left:1275px;top:254px" width="7" height="9" viewBox="0 0 7 9"><path d="M6.7 4.5L0.2 0.3V8.7Z" fill="#6a6a6a" stroke="#6a6a6a" stroke-width="0.5" stroke-linejoin="round"/></svg>
<div class="org" style="left:224px;top:274px;width:213px;height:22px">User Object Accessibility Detailed</div>
<div class="a" style="left:224px;top:296px;width:1064px;height:10px;background:#0070c0"></div>
<div class="a" style="left:224px;top:306px;width:1064px;height:324px;border:1px solid #a3a3a3;background:#fff"></div>
<div class="a" style="left:225px;top:307px;width:1036px;height:15px;background:#e0e3e8"></div>
<div class="a" style="left:1261px;top:307px;width:26px;height:15px;background:#f4f5fb"></div>
<svg class="a" style="left:229px;top:307px" width="12" height="12" viewBox="0 0 12 12"><path d="M0 11L11 0V11Z" fill="#eceef2"/><path d="M0.5 11L11 0.5" stroke="#a9c6ea" stroke-width="0.8"/></svg>
<div class="a t" style="left:245px;top:307px;width:76px;font-size:10.2px;line-height:15px;color:#44403c;text-align:center">User Name</div>
<svg class="a" style="left:324px;top:314px" width="8" height="5" viewBox="0 0 8 5"><path d="M0.3 0.3H7.7L4 4.5Z" fill="#fff"/><path d="M1.5 1H6.5L4 3.2Z" fill="#1a1e28"/></svg>
<div class="a" style="left:337px;top:307px;width:227px;height:15px;background:linear-gradient(#fdd353,#fee56c)"></div>
<div class="a" style="left:336px;top:307px;width:1px;height:15px;background:#c4c8cc"></div>
<div class="a t" style="left:339px;top:307px;width:208px;font-size:10.2px;line-height:15px;color:#44403c;text-align:center">ObjName</div>
<svg class="a" style="left:550px;top:314px" width="8" height="5" viewBox="0 0 8 5"><path d="M0.3 0.3H7.7L4 4.5Z" fill="#fff"/><path d="M1.5 1H6.5L4 3.2Z" fill="#1a1e28"/></svg>
<div class="a" style="left:562px;top:307px;width:1px;height:15px;background:#c4c8cc"></div>
<div class="a t" style="left:565px;top:307px;width:200px;font-size:10.2px;line-height:15px;color:#44403c;text-align:center">ObjName</div>
<svg class="a" style="left:766px;top:311px" width="11" height="9" viewBox="0 0 11 9"><g stroke="#fff" stroke-width="1.6" fill="#fff" stroke-linejoin="round"><path d="M1 4H6L3.5 6Z"/><path d="M7.5 1.2V7.8M6 2.8L7.5 1L9 2.8" fill="none"/></g><path d="M1 4H6L3.5 6Z" fill="#1a1e28"/><path d="M7.5 1.2V7.8M6.1 2.6L7.5 1.1L8.9 2.6" fill="none" stroke="#1a1e28" stroke-width="1.1"/></svg>
<div class="a" style="left:780px;top:307px;width:1px;height:15px;background:#c4c8cc"></div>
<div class="a t" style="left:783px;top:307px;width:72px;font-size:10.2px;line-height:15px;color:#44403c;text-align:center">ObjType</div>
<svg class="a" style="left:856px;top:311px" width="11" height="9" viewBox="0 0 11 9"><g stroke="#fff" stroke-width="1.6" fill="#fff" stroke-linejoin="round"><path d="M1 4H6L3.5 6Z"/><path d="M7.5 1.2V7.8M6 2.8L7.5 1L9 2.8" fill="none"/></g><path d="M1 4H6L3.5 6Z" fill="#1a1e28"/><path d="M7.5 1.2V7.8M6.1 2.6L7.5 1.1L8.9 2.6" fill="none" stroke="#1a1e28" stroke-width="1.1"/></svg>
<div class="a" style="left:870px;top:307px;width:1px;height:15px;background:#c4c8cc"></div>
<div class="a t" style="left:875px;top:307px;width:49px;font-size:10.2px;line-height:15px;color:#44403c">IsEnabled</div>
<svg class="a" style="left:927px;top:314px" width="8" height="5" viewBox="0 0 8 5"><path d="M0.3 0.3H7.7L4 4.5Z" fill="#fff"/><path d="M1.5 1H6.5L4 3.2Z" fill="#1a1e28"/></svg>
<div class="a" style="left:939px;top:307px;width:1px;height:15px;background:#c4c8cc"></div>
<div class="a t" style="left:944px;top:307px;width:34px;font-size:10.2px;line-height:15px;color:#44403c">IsHide</div>
<svg class="a" style="left:981px;top:314px" width="8" height="5" viewBox="0 0 8 5"><path d="M0.3 0.3H7.7L4 4.5Z" fill="#fff"/><path d="M1.5 1H6.5L4 3.2Z" fill="#1a1e28"/></svg>
<div class="a" style="left:993px;top:307px;width:1px;height:15px;background:#c4c8cc"></div>
<div class="a t" style="left:998px;top:307px;width:70px;font-size:10.2px;line-height:15px;color:#44403c">CanAddRecord</div>
<svg class="a" style="left:1071px;top:314px" width="8" height="5" viewBox="0 0 8 5"><path d="M0.3 0.3H7.7L4 4.5Z" fill="#fff"/><path d="M1.5 1H6.5L4 3.2Z" fill="#1a1e28"/></svg>
<div class="a" style="left:1083px;top:307px;width:1px;height:15px;background:#c4c8cc"></div>
<div class="a t" style="left:1088px;top:307px;width:70px;font-size:10.2px;line-height:15px;color:#44403c">CanEditRecord</div>
<svg class="a" style="left:1161px;top:314px" width="8" height="5" viewBox="0 0 8 5"><path d="M0.3 0.3H7.7L4 4.5Z" fill="#fff"/><path d="M1.5 1H6.5L4 3.2Z" fill="#1a1e28"/></svg>
<div class="a" style="left:1173px;top:307px;width:1px;height:15px;background:#c4c8cc"></div>
<div class="a t" style="left:1178px;top:307px;width:67px;font-size:10.2px;line-height:15px;color:#44403c">CanDeleteRec</div>
<svg class="a" style="left:1248px;top:314px" width="8" height="5" viewBox="0 0 8 5"><path d="M0.3 0.3H7.7L4 4.5Z" fill="#fff"/><path d="M1.5 1H6.5L4 3.2Z" fill="#1a1e28"/></svg>
<div class="a" style="left:1260px;top:307px;width:1px;height:15px;background:#c4c8cc"></div>
<div class="a" style="left:225px;top:322px;width:18px;height:14px;background:#fcd868"></div>
<svg class="a" style="left:229px;top:323px" width="11" height="11" viewBox="0 0 11 11"><path d="M5.5 0.8V10.2M0.8 5.5H10.2M2.3 2.3L8.7 8.7M8.7 2.3L2.3 8.7" stroke="#38383e" stroke-width="1.1"/><circle cx="5.5" cy="5.5" r="1.3" fill="#38383e"/></svg>
<div class="a" style="left:243px;top:321px;width:1px;height:15px;background:#9c9ea2"></div>
<div class="a" style="left:243px;top:322px;width:1018px;height:14px;background:#a8d0f2"></div>
<div class="a" style="left:242px;top:322px;width:1px;height:14px;background:#d8e6f4"></div>
<div class="a" style="left:336px;top:322px;width:1px;height:14px;background:#d8e6f4"></div>
<div class="a" style="left:562px;top:322px;width:1px;height:14px;background:#d8e6f4"></div>
<div class="a" style="left:780px;top:322px;width:1px;height:14px;background:#d8e6f4"></div>
<div class="a" style="left:870px;top:322px;width:1px;height:14px;background:#d8e6f4"></div>
<svg class="a" style="left:899px;top:323px" width="13" height="13" viewBox="0 0 13 13"><rect x="0" y="0" width="13" height="13" rx="2.8" fill="#0a5cc0"/><rect x="3.8" y="5.9" width="5.4" height="1.2" fill="#fff"/></svg>
<div class="a" style="left:939px;top:322px;width:1px;height:14px;background:#d8e6f4"></div>
<svg class="a" style="left:961px;top:323px" width="13" height="13" viewBox="0 0 13 13"><rect x="0" y="0" width="13" height="13" rx="2.8" fill="#0a5cc0"/><rect x="3.8" y="5.9" width="5.4" height="1.2" fill="#fff"/></svg>
<div class="a" style="left:993px;top:322px;width:1px;height:14px;background:#d8e6f4"></div>
<svg class="a" style="left:1033px;top:323px" width="13" height="13" viewBox="0 0 13 13"><rect x="0" y="0" width="13" height="13" rx="2.8" fill="#0a5cc0"/><rect x="3.8" y="5.9" width="5.4" height="1.2" fill="#fff"/></svg>
<div class="a" style="left:1083px;top:322px;width:1px;height:14px;background:#d8e6f4"></div>
<svg class="a" style="left:1123px;top:323px" width="13" height="13" viewBox="0 0 13 13"><rect x="0" y="0" width="13" height="13" rx="2.8" fill="#0a5cc0"/><rect x="3.8" y="5.9" width="5.4" height="1.2" fill="#fff"/></svg>
<div class="a" style="left:1173px;top:322px;width:1px;height:14px;background:#d8e6f4"></div>
<svg class="a" style="left:1211px;top:323px" width="13" height="13" viewBox="0 0 13 13"><rect x="0" y="0" width="13" height="13" rx="2.8" fill="#0a5cc0"/><rect x="3.8" y="5.9" width="5.4" height="1.2" fill="#fff"/></svg>
<div class="a" style="left:336px;top:321px;width:229px;height:16px;background:#fff;border:1px solid #f6a0a0;border-width:1px 2px 1px 2px"></div>
<div class="a" style="left:545px;top:323px;width:1px;height:13px;background:#111"></div>
<div class="a" style="left:546px;top:323px;width:17px;height:13px;background:#e2effb;border:1px solid #1a72d2;border-radius:2px"></div>
<svg class="a" style="left:549px;top:330px" width="11" height="6" viewBox="0 0 11 6"><path d="M1 1L5.5 5.2L10 1" fill="none" stroke="#404040" stroke-width="0.9"/></svg>
<div class="a" style="left:225px;top:336px;width:18px;height:276px;background:#f2f4fc"></div>
<div class="a" style="left:225px;top:351px;width:1062px;height:1px;background:#f1f1f1"></div>
<div class="a" style="left:225px;top:366px;width:1062px;height:1px;background:#f1f1f1"></div>
<div class="a" style="left:225px;top:381px;width:1062px;height:1px;background:#f1f1f1"></div>
<div class="a" style="left:225px;top:396px;width:1062px;height:1px;background:#f1f1f1"></div>
<div class="a" style="left:225px;top:411px;width:1062px;height:1px;background:#f1f1f1"></div>
<div class="a" style="left:225px;top:426px;width:1062px;height:1px;background:#f1f1f1"></div>
<div class="a" style="left:225px;top:441px;width:1062px;height:1px;background:#f1f1f1"></div>
<div class="a" style="left:225px;top:456px;width:1062px;height:1px;background:#f1f1f1"></div>
<div class="a" style="left:225px;top:471px;width:1062px;height:1px;background:#f1f1f1"></div>
<div class="a" style="left:225px;top:486px;width:1062px;height:1px;background:#f1f1f1"></div>
<div class="a" style="left:225px;top:501px;width:1062px;height:1px;background:#f1f1f1"></div>
<div class="a" style="left:225px;top:516px;width:1062px;height:1px;background:#f1f1f1"></div>
<div class="a" style="left:225px;top:531px;width:1062px;height:1px;background:#f1f1f1"></div>
<div class="a" style="left:225px;top:546px;width:1062px;height:1px;background:#f1f1f1"></div>
<div class="a" style="left:225px;top:561px;width:1062px;height:1px;background:#f1f1f1"></div>
<div class="a" style="left:225px;top:576px;width:1062px;height:1px;background:#f1f1f1"></div>
<div class="a" style="left:225px;top:591px;width:1062px;height:1px;background:#f1f1f1"></div>
<div class="a" style="left:225px;top:606px;width:1062px;height:1px;background:#f1f1f1"></div>
<div class="a" style="left:242px;top:336px;width:1px;height:276px;background:#f1f1f1"></div>
<div class="a" style="left:336px;top:336px;width:1px;height:276px;background:#f1f1f1"></div>
<div class="a" style="left:562px;top:336px;width:1px;height:276px;background:#f1f1f1"></div>
<div class="a" style="left:780px;top:336px;width:1px;height:276px;background:#f1f1f1"></div>
<div class="a" style="left:870px;top:336px;width:1px;height:276px;background:#f1f1f1"></div>
<div class="a" style="left:939px;top:336px;width:1px;height:276px;background:#f1f1f1"></div>
<div class="a" style="left:993px;top:336px;width:1px;height:276px;background:#f1f1f1"></div>
<div class="a" style="left:1083px;top:336px;width:1px;height:276px;background:#f1f1f1"></div>
<div class="a" style="left:1173px;top:336px;width:1px;height:276px;background:#f1f1f1"></div>
<div class="a" style="left:1260px;top:336px;width:1px;height:276px;background:#f1f1f1"></div>
<div class="a" style="left:225px;top:612px;width:1062px;height:1px;background:#a8a8a8"></div>
<div class="a" style="left:225px;top:613px;width:1062px;height:16px;background:linear-gradient(#fafbfc 0,#f2f3f5 1px,#f2f3f5 9px,#e5e6e9 9px)"></div>
<div class="a t" style="left:230px;top:614px;font-size:10.8px;line-height:17px;color:#575268">Record:</div>
<svg class="a" style="left:276px;top:618px" width="8" height="7" viewBox="0 0 8 7"><rect x="0" y="0" width="1.3" height="7" fill="#34363c"/><path d="M2.2 3.5L6.5 0V7Z" fill="#34363c"/></svg>
<svg class="a" style="left:294px;top:618px" width="5" height="7" viewBox="0 0 5 7"><path d="M0 3.5L4.2 0V7Z" fill="#b6b8bc"/></svg>
<div class="a" style="left:304px;top:614px;width:50px;height:15px;background:#fff;border-left:1px solid #a8a8a8;border-right:1px solid #b8b8b8;border-top:1px solid #b8b8b8"></div>
<div class="a t" style="left:306px;top:614px;font-size:11.2px;line-height:17px;color:#1a1a24">1 of 1</div>
<svg class="a" style="left:363px;top:618px" width="5" height="7" viewBox="0 0 5 7"><path d="M0 0L4.5 3.5L0 7Z" fill="#b6b8bc"/></svg>
<svg class="a" style="left:379px;top:618px" width="7" height="7" viewBox="0 0 7 7"><path d="M0 0L4.2 3.5L0 7Z" fill="#34363c"/><rect x="5" y="0" width="1.3" height="7" fill="#34363c"/></svg>
<svg class="a" style="left:393px;top:616px" width="14" height="12" viewBox="0 0 14 12"><path d="M0 2L4.2 5.5L0 9Z" fill="#b6b8bc"/><g stroke="#f6dcb4" stroke-width="1"><path d="M8.5 1.5V9.5M4.5 5.5H12.5M5.7 2.7L11.3 8.3M11.3 2.7L5.7 8.3"/></g><circle cx="8.5" cy="5.5" r="1.6" fill="#fff" stroke="#f6dcb4"/></svg>
<div class="a" style="left:411px;top:613px;width:1px;height:16px;background:#a8a8a8"></div>
<div class="a" style="left:412px;top:613px;width:1px;height:16px;background:#fcfcfc"></div>
<svg class="a" style="left:419px;top:613px" width="18" height="17" viewBox="0 0 18 17"><g fill="none" stroke="#7e7e7e" stroke-width="1.3"><path d="M1.5 4.5V1.5H16.5V4L11.5 9"/><path d="M1.5 4.5L7.5 10V16.5"/><path d="M10 10.5L16 16.5M16 10.5L10 16.5" stroke="#9a9a9a" stroke-width="1.1"/></g></svg>
<div class="a t" style="left:438px;top:615px;font-size:11.9px;line-height:17px;color:#a8a8b4">No Filter</div>
<div class="a" style="left:491px;top:613px;width:1px;height:16px;background:#b0b0b0"></div>
<div class="a" style="left:497px;top:614px;width:70px;height:15px;background:#fff;border:1px solid #a8a8a8;border-bottom:0"></div>
<div class="a t" style="left:500px;top:614px;font-size:11px;line-height:17px;color:#111">Search</div>
<div class="a" style="left:340px;top:336px;width:529px;height:226px;background:#fff;border:1px solid #555"></div>
<div class="a t" style="left:344px;top:337px;font-size:10.3px;line-height:14px;color:#1a1a24;">CommonName</div>
<div class="a t" style="left:571px;top:337px;font-size:10.3px;line-height:14px;color:#1a1a24;">ObjName</div>
<div class="a t" style="left:798px;top:337px;font-size:10.3px;line-height:14px;color:#1a1a24;">ObjType</div>
<div class="a" style="left:341px;top:350px;width:511px;height:1px;background:#a0a0a0"></div>
<div class="a" style="left:567px;top:337px;width:1px;height:224px;background:#a0a0a0"></div>
<div class="a" style="left:794px;top:337px;width:1px;height:224px;background:#a0a0a0"></div>
<div class="a" style="left:852px;top:337px;width:16px;height:224px;background:#efefef"></div>
<div class="a" style="left:859px;top:354px;width:3px;height:17px;background:#8a8a8a;border-radius:1px"></div>
<div class="a t" style="left:341px;top:351px;width:225px;font-size:10.3px;line-height:14px;color:#1a1a24;text-align:right">About</div>
<div class="a t" style="left:571px;top:351px;font-size:10.3px;line-height:14px;color:#1a1a24;">frmAbout</div>
<div class="a t" style="left:798px;top:351px;width:54px;font-size:10.3px;line-height:14px;color:#1a1a24;">Form</div>
<div class="a t" style="left:341px;top:365px;width:225px;font-size:10.3px;line-height:14px;color:#1a1a24;text-align:right">Action User Form</div>
<div class="a t" style="left:571px;top:365px;font-size:10.3px;line-height:14px;color:#1a1a24;">frmActiveUser</div>
<div class="a t" style="left:798px;top:365px;width:54px;font-size:10.3px;line-height:14px;color:#1a1a24;">Form</div>
<div class="a t" style="left:341px;top:379px;width:225px;font-size:10.3px;line-height:14px;color:#1a1a24;text-align:right">Active : In Action User Form</div>
<div class="a t" style="left:571px;top:379px;font-size:10.3px;line-height:14px;color:#1a1a24;">frmActiveUser_Active</div>
<div class="a t" style="left:798px;top:379px;width:54px;font-size:10.3px;line-height:14px;color:#1a1a24;">CheckBox</div>
<div class="a t" style="left:341px;top:393px;width:225px;font-size:10.3px;line-height:14px;color:#1a1a24;text-align:right">cmdAction : In Action User Form</div>
<div class="a t" style="left:571px;top:393px;font-size:10.3px;line-height:14px;color:#1a1a24;">frmActiveUser_btnAdd</div>
<div class="a t" style="left:798px;top:393px;width:54px;font-size:10.3px;line-height:14px;color:#1a1a24;">CommandB</div>
<div class="a t" style="left:341px;top:407px;width:225px;font-size:10.3px;line-height:14px;color:#1a1a24;text-align:right">cmdEdit : In Action User Form</div>
<div class="a t" style="left:571px;top:407px;font-size:10.3px;line-height:14px;color:#1a1a24;">frmActiveUser_btnEdit</div>
<div class="a t" style="left:798px;top:407px;width:54px;font-size:10.3px;line-height:14px;color:#1a1a24;">CommandB</div>
<div class="a t" style="left:341px;top:421px;width:225px;font-size:10.3px;line-height:14px;color:#1a1a24;text-align:right">cmdPrintUserLog : In Action User Form</div>
<div class="a t" style="left:571px;top:421px;font-size:10.3px;line-height:14px;color:#1a1a24;">frmActiveUser_btnPrintUserLog</div>
<div class="a t" style="left:798px;top:421px;width:54px;font-size:10.3px;line-height:14px;color:#1a1a24;">CommandB</div>
<div class="a t" style="left:341px;top:435px;width:225px;font-size:10.3px;line-height:14px;color:#1a1a24;text-align:right">Add User Form</div>
<div class="a t" style="left:571px;top:435px;font-size:10.3px;line-height:14px;color:#1a1a24;">frmAddUser</div>
<div class="a t" style="left:798px;top:435px;width:54px;font-size:10.3px;line-height:14px;color:#1a1a24;">Form</div>
<div class="a t" style="left:341px;top:449px;width:225px;font-size:10.3px;line-height:14px;color:#1a1a24;text-align:right">Active : In Add User Form</div>
<div class="a t" style="left:571px;top:449px;font-size:10.3px;line-height:14px;color:#1a1a24;">frmAddUser_Active</div>
<div class="a t" style="left:798px;top:449px;width:54px;font-size:10.3px;line-height:14px;color:#1a1a24;">CheckBox</div>
<div class="a t" style="left:341px;top:463px;width:225px;font-size:10.3px;line-height:14px;color:#1a1a24;text-align:right">cmdEdit : In Add User Form</div>
<div class="a t" style="left:571px;top:463px;font-size:10.3px;line-height:14px;color:#1a1a24;">frmAddUser_btnCancel</div>
<div class="a t" style="left:798px;top:463px;width:54px;font-size:10.3px;line-height:14px;color:#1a1a24;">CommandB</div>
<div class="a t" style="left:341px;top:477px;width:225px;font-size:10.3px;line-height:14px;color:#1a1a24;text-align:right">cmdAdd : In Add User Form</div>
<div class="a t" style="left:571px;top:477px;font-size:10.3px;line-height:14px;color:#1a1a24;">frmAddUser_btnCreate</div>
<div class="a t" style="left:798px;top:477px;width:54px;font-size:10.3px;line-height:14px;color:#1a1a24;">CommandB</div>
<div class="a t" style="left:341px;top:491px;width:225px;font-size:10.3px;line-height:14px;color:#1a1a24;text-align:right">List Box : In Action User Form</div>
<div class="a t" style="left:571px;top:491px;font-size:10.3px;line-height:14px;color:#1a1a24;">frmAddUser_List0</div>
<div class="a t" style="left:798px;top:491px;width:54px;font-size:10.3px;line-height:14px;color:#1a1a24;">ListBox</div>
<div class="a t" style="left:341px;top:505px;width:225px;font-size:10.3px;line-height:14px;color:#1a1a24;text-align:right">frmAdminDBMainLocation_Form</div>
<div class="a t" style="left:571px;top:505px;font-size:10.3px;line-height:14px;color:#1a1a24;">frmAdminDBMainLocation</div>
<div class="a t" style="left:798px;top:505px;width:54px;font-size:10.3px;line-height:14px;color:#1a1a24;">Form</div>
<div class="a t" style="left:341px;top:519px;width:225px;font-size:10.3px;line-height:14px;color:#1a1a24;text-align:right">frmAdminDBMainLocationEdit_Form</div>
<div class="a t" style="left:571px;top:519px;font-size:10.3px;line-height:14px;color:#1a1a24;">frmAdminDBMainLocationEdit</div>
<div class="a t" style="left:798px;top:519px;width:54px;font-size:10.3px;line-height:14px;color:#1a1a24;">Form</div>
<div class="a t" style="left:341px;top:533px;width:225px;font-size:10.3px;line-height:14px;color:#1a1a24;text-align:right">HR Dashboard</div>
<div class="a t" style="left:571px;top:533px;font-size:10.3px;line-height:14px;color:#1a1a24;">frmAdminHRDashboard</div>
<div class="a t" style="left:798px;top:533px;width:54px;font-size:10.3px;line-height:14px;color:#1a1a24;">Form</div>
<div class="a t" style="left:341px;top:547px;width:225px;font-size:10.3px;line-height:14px;color:#1a1a24;text-align:right">btnAddEmployee : In HR Dashboard</div>
<div class="a t" style="left:571px;top:547px;font-size:10.3px;line-height:14px;color:#1a1a24;">frmAdminHRDashboard_btnAddEmployee</div>
<div class="a t" style="left:798px;top:547px;width:54px;font-size:10.3px;line-height:14px;color:#1a1a24;">CommandB</div>
</body></html>
